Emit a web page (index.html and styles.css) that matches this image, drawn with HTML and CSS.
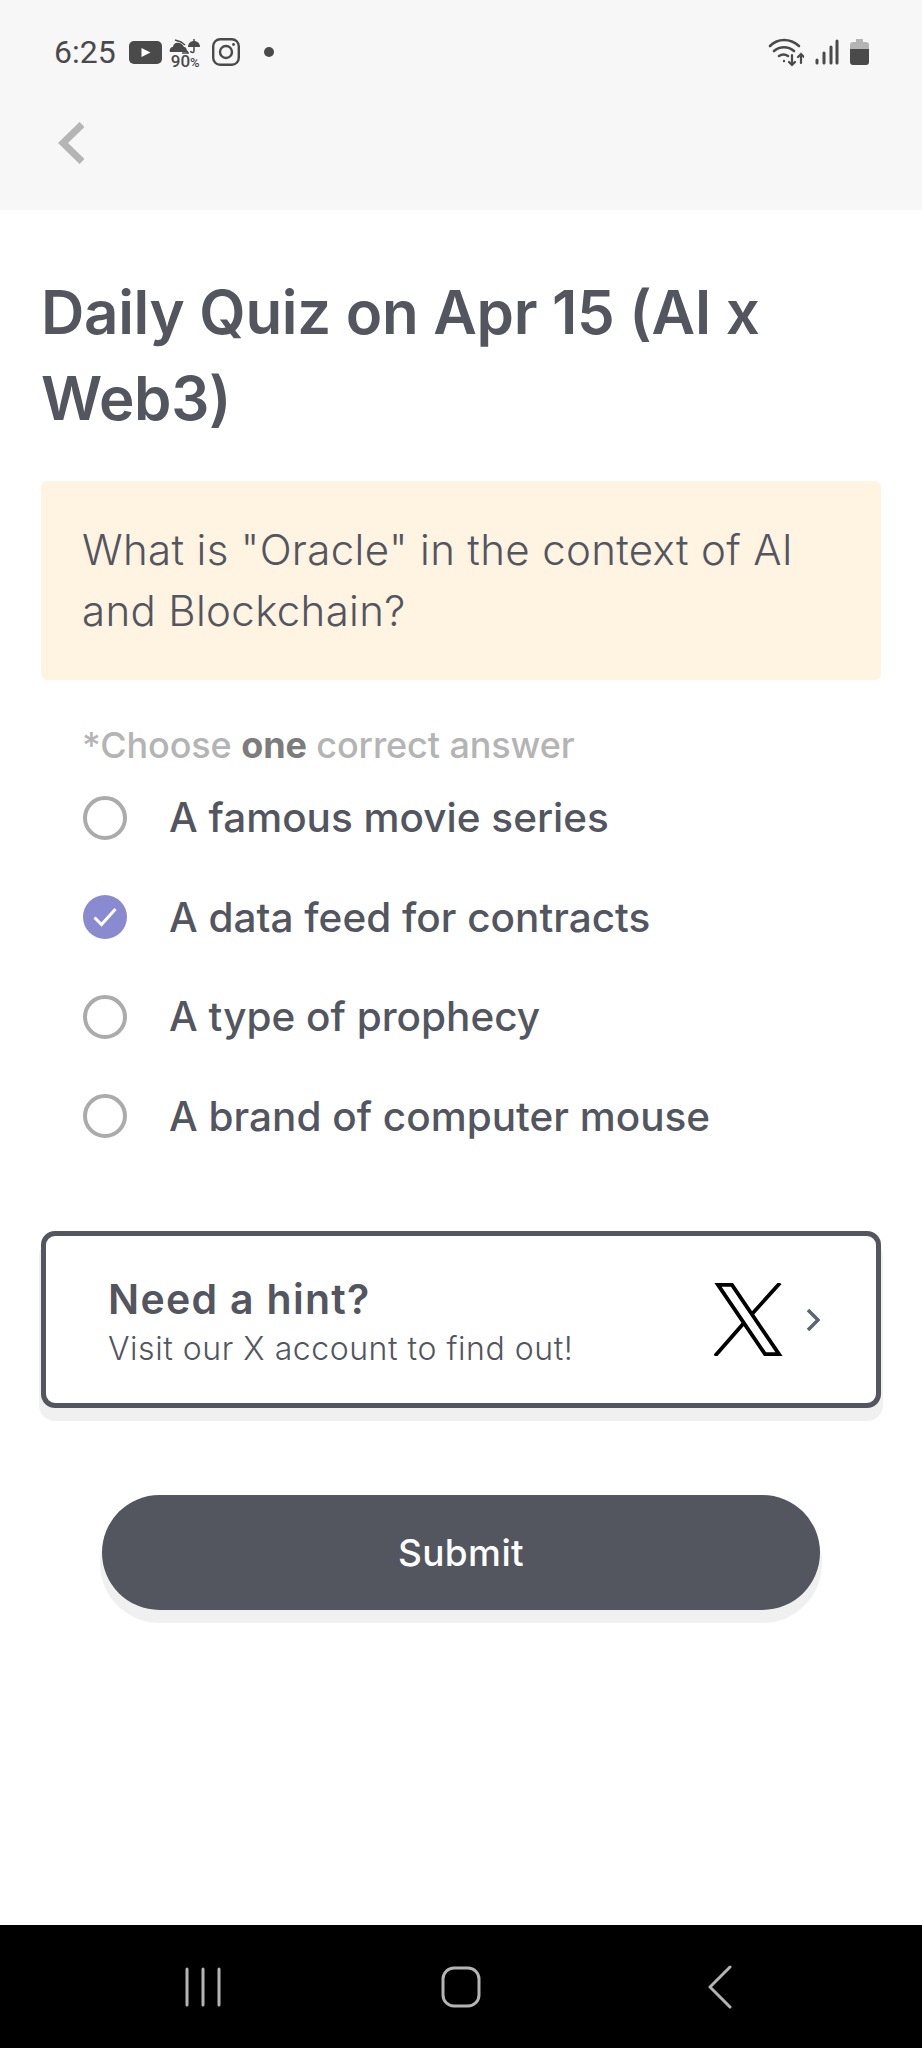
FILE: index.html
```html
<!DOCTYPE html>
<html lang="en">
<head>
    <meta charset="UTF-8">
    <meta name="viewport" content="width=device-width, initial-scale=1.0">
    <title>Daily Quiz</title>
    <link rel="stylesheet" href="styles.css">
</head>
<body>
    <div class="app">
        <header class="top">
            <div class="status">
                <span class="time">6:25</span>
                <svg class="ic-yt" width="33" height="23" viewBox="0 0 33 23"><rect width="33" height="23" rx="5" fill="#4a4a4a"/><path d="M12.5 7l9 4.500-9 4.500z" fill="#fff"/></svg>
                <div class="weather">
                    <svg width="33" height="16" viewBox="0 0 33 16">
                        <path d="M1 14c-1-3 1-5 3-5 0-3 3-5 6-4 2 0 4 2 5 4 2 0 3 2 3 5z" fill="#4a4a4a"/>
                        <path d="M6 2l6 2 4 3" fill="none" stroke="#4a4a4a" stroke-width="1.500"/>
                        <path d="M19 9c0-4 3-6 6-6s6 2 6 6z" fill="#4a4a4a"/>
                        <path d="M25 1v12c0 2-3 2-3.500 0" fill="none" stroke="#4a4a4a" stroke-width="1.500"/>
                        <path d="M13 15h7M15 12l4 2" stroke="#4a4a4a" stroke-width="1.500"/>
                    </svg>
                    <span class="rain">90<small>%</small></span>
                </div>
                <svg class="ic-ig" width="28" height="28" viewBox="0 0 28 28" fill="none" stroke="#4a4a4a" stroke-width="2.400"><rect x="1.200" y="1.200" width="25.600" height="25.600" rx="7"/><circle cx="14" cy="14" r="6"/><circle cx="21.500" cy="6.500" r="1.400" fill="#4a4a4a" stroke="none"/></svg>
                <span class="dot"></span>
                <div class="status-right">
                    <svg width="36" height="30" viewBox="0 0 36 30" fill="none" stroke="#4a4a4a" stroke-width="2.600" stroke-linecap="round">
                        <path d="M2 9C10 1 22 1 31 9"/>
                        <path d="M6 14c6-5 14-5 20 0"/>
                        <path d="M11 19c3-2 6-2 9 0"/>
                        <circle cx="16" cy="24" r="1.200" fill="#4a4a4a" stroke="none"/>
                        <path d="M24 18v10M21 25l3 3 3-3" stroke-width="2.200"/>
                        <path d="M33 26V17M30 20l3-3 3 3" stroke-width="2.200"/>
                    </svg>
                    <svg class="ic-signal" width="24" height="26" viewBox="0 0 24 26" stroke="#4a4a4a" stroke-width="3" stroke-linecap="round"><path d="M2 24v-3M9 24V14M16 24V8M22 24V2"/></svg>
                    <svg class="ic-batt" width="19" height="26" viewBox="0 0 19 26"><path d="M6 0h7v3h3a3 3 0 0 1 3 3v5H0V6a3 3 0 0 1 3-3h3z" fill="#b4b4b4"/><path d="M0 10h19v13a3 3 0 0 1-3 3H3a3 3 0 0 1-3-3z" fill="#4a4a4a"/></svg>
                </div>
            </div>
            <button type="button" class="back" aria-label="Back">
                <svg width="26" height="42" viewBox="0 0 26 42" fill="none" stroke="#b5b5b5" stroke-width="7"><path d="M24 2.500L5 21l19 18.500"/></svg>
            </button>
        </header>

        <main class="content">
            <h1>Daily Quiz on Apr 15 (AI x Web3)</h1>

            <div class="question">What is "Oracle" in the context of AI and Blockchain?</div>

            <p class="hint-line">*Choose <b>one</b> correct answer</p>

            <ul class="options">
                <li class="option"><span class="radio"></span>A famous movie series</li>
                <li class="option">
                    <span class="radio checked"><svg width="24" height="20" viewBox="0 0 24 20" fill="none" stroke="#fff" stroke-width="3"><path d="M1.500 10.500l7 7L22.500 2"/></svg></span>
                    A data feed for contracts
                </li>
                <li class="option"><span class="radio"></span>A type of prophecy</li>
                <li class="option"><span class="radio"></span>A brand of computer mouse</li>
            </ul>

            <div class="hint-card">
                <div class="hint-text">
                    <div class="hint-title">Need a hint?</div>
                    <div class="hint-sub">Visit our X account to find out!</div>
                </div>
                <svg class="x-logo" width="69" height="73" viewBox="0 0 69 73" fill="none" stroke="#000" stroke-width="3.800"><path d="M4 1.900h14L65 71.100H51z"/><path d="M66 0L38 31M29 41L1 73"/></svg>
                <svg class="chev" width="14" height="24" viewBox="0 0 14 24" fill="none" stroke="#5b6570" stroke-width="3.500"><path d="M2 2l10 10L2 22"/></svg>
            </div>

            <button type="button" class="submit">Submit</button>
        </main>

        <nav class="navbar">
            <svg width="36" height="40" viewBox="0 0 36 40" stroke="#b4b4b4" stroke-width="3" stroke-linecap="round"><path d="M2 2v36M18 2v36M34 2v36"/></svg>
            <svg width="40" height="42" viewBox="0 0 40 42" fill="none" stroke="#b4b4b4" stroke-width="3"><rect x="2" y="2" width="36" height="38" rx="11"/></svg>
            <svg class="nav-back" width="25" height="44" viewBox="0 0 25 44" fill="none" stroke="#b4b4b4" stroke-width="3" stroke-linecap="round" stroke-linejoin="round"><path d="M23 2L3 22l20 20"/></svg>
        </nav>
    </div>
</body>
</html>
```

FILE: styles.css
```css
* {
    box-sizing: border-box;
}
body {
    margin: 0;
    font-family: Inter, "Noto Sans", sans-serif;
    color: #53555f;
    background-color: #fff;
}
.app {
    display: flex;
    flex-direction: column;
    height: 2048px;
}
.top {
    height: 210px;
    background-color: #f7f7f7;
    padding: 36px 0 0 54px;
}
.status {
    display: flex;
    align-items: center;
    height: 32px;
    padding-right: 53px;
}
.time {
    font-family: Roboto, sans-serif;
    font-size: 32px;
    color: #4a4a4a;
    margin-right: 13px;
}
.weather {
    display: flex;
    flex-direction: column;
    align-items: center;
    margin-left: 7px;
    width: 33px;
    margin-top: 4px;
}
.rain {
    font-family: Roboto, sans-serif;
    font-size: 17px;
    font-weight: 500;
    line-height: 14px;
    color: #4a4a4a;
}
.rain small {
    font-size: 13px;
}
.ic-ig {
    margin-left: 10px;
}
.dot {
    width: 10px;
    height: 10px;
    border-radius: 50%;
    background-color: #4a4a4a;
    margin-left: 24px;
}
.status-right {
    display: flex;
    align-items: center;
    gap: 11px;
    margin-left: auto;
}
.back {
    display: block;
    background: none;
    border: none;
    padding: 0;
    margin: 54px 0 0 4px;
}
.content {
    flex: 1;
    padding: 0 41px;
}
h1 {
    margin: 59px 0 0;
    font-size: 60px;
    line-height: 86px;
    font-weight: 600;
    letter-spacing: -0.3px;
}
.question {
    margin-top: 40px;
    padding: 38px 41px 39px;
    background-color: #fff3e1;
    border-radius: 6px;
    font-size: 42px;
    line-height: 61px;
    font-weight: 300;
    letter-spacing: 0.35px;
}
.hint-line {
    margin: 42px 0 0 41px;
    font-size: 36px;
    line-height: 46px;
    font-weight: 500;
    color: #b4b4b4;
    letter-spacing: -0.1px;
}
.hint-line b {
    font-weight: 700;
    color: #7c7c7c;
}
.options {
    list-style: none;
    margin: 0;
    padding: 0 0 0 42px;
}
.option {
    display: flex;
    align-items: center;
    gap: 42px;
    height: 99.500px;
    font-size: 40.500px;
    font-weight: 500;
}
.radio {
    flex: none;
    display: flex;
    align-items: center;
    justify-content: center;
    width: 44px;
    height: 44px;
    border: 4px solid #ababab;
    border-radius: 50%;
}
.radio.checked {
    border: none;
    background-color: #8a8ad0;
}
.hint-card {
    display: flex;
    align-items: center;
    height: 177px;
    margin-top: 65px;
    padding: 0 56px 0 62px;
    border: 5px solid #53555f;
    border-radius: 14px;
    box-shadow: 0 11px 0 2px #f0f0f0;
}
.hint-text {
    flex: 1;
    margin-top: 3px;
}
.hint-title {
    font-size: 41px;
    line-height: 55px;
    font-weight: 600;
    letter-spacing: 1.3px;
}
.hint-sub {
    font-size: 32px;
    line-height: 44px;
    font-weight: 300;
    letter-spacing: 0.55px;
}
.chev {
    margin-left: 23px;
}
.submit {
    display: block;
    width: 718px;
    height: 115px;
    margin: 87px auto 0;
    background-color: #53555f;
    color: #fff;
    border: none;
    border-radius: 58px;
    box-shadow: 0 11px 0 2px #f0f0f0;
    font-family: inherit;
    font-size: 37px;
    font-weight: 500;
    letter-spacing: 0.4px;
}
.navbar {
    flex: none;
    height: 123px;
    background-color: #000;
    display: grid;
    grid-template-columns: repeat(3, 1fr);
    align-items: center;
    justify-items: center;
    padding: 0 74px;
}
```
